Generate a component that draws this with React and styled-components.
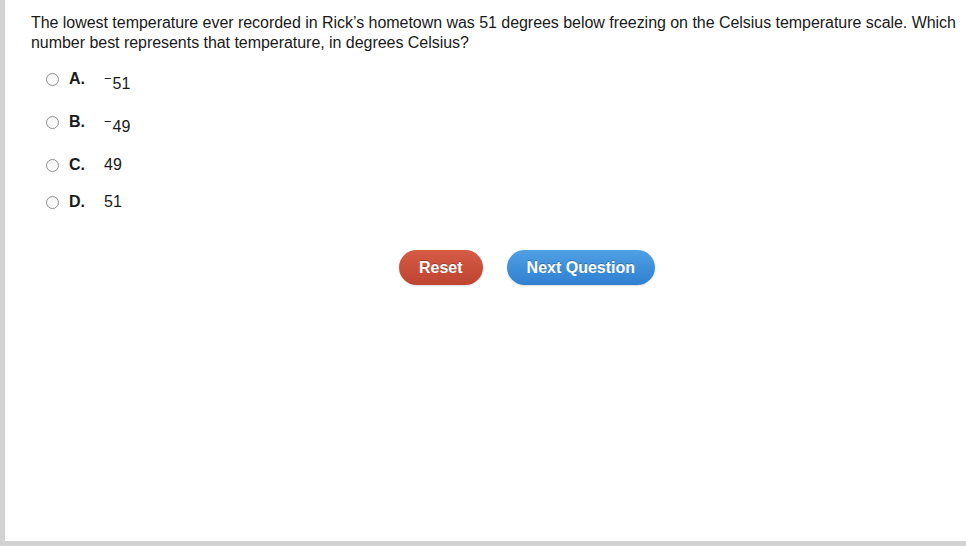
import React from "react";
import styled, { createGlobalStyle } from "styled-components";

const Global = createGlobalStyle`
  html, body { margin: 0; padding: 0; background: #d2d2d2; overflow: hidden; }
  body { font-family: "Liberation Sans", Arial, sans-serif; }
`;

const Frame = styled.div`
  width: 966px;
  height: 546px;
  background: #d2d2d2;
  padding: 0 0 5px 5px;
  box-sizing: border-box;
`;

const Panel = styled.div`
  background: #fff;
  height: 100%;
  padding: 13px 4px 0 26px;
  box-sizing: border-box;
  color: #111;
`;

const Question = styled.p`
  margin: 0;
  font-size: 16px;
  line-height: 20px;
  letter-spacing: -0.04px;
  color: #1a1a1a;
`;

const Options = styled.div`
  display: flex;
  flex-direction: column;
  margin: 17px 0 0 15px;
`;

const Row = styled.label`
  display: flex;
  align-items: flex-start;
  height: ${(p) => (p.$tall ? "43px" : "37px")};
  font-size: 16px;
  line-height: 18px;
`;

const Radio = styled.span`
  width: 11px;
  height: 11px;
  margin-top: 3px;
  border-radius: 50%;
  border: 1px solid #8f8f8f;
  background: linear-gradient(#f4f4f4, #fff);
  flex: none;
`;

const Letter = styled.span`
  font-weight: bold;
  width: 35px;
  margin-left: 10px;
  color: #1a1a1a;
`;

const Value = styled.span`
  color: #1a1a1a;
  margin-top: ${(p) => (p.$tall ? "5px" : "0")};
`;

const Neg = styled.span`
  font-size: 13px;
  position: relative;
  top: -6px;
  margin-right: 1px;
`;

const Buttons = styled.div`
  display: flex;
  gap: 24px;
  margin: 20px 0 0 368px;
`;

const Button = styled.button`
  height: 35px;
  padding: 0 20px;
  border: none;
  border-radius: 18px;
  font-family: "Liberation Sans", Arial, sans-serif;
  font-weight: bold;
  font-size: 16px;
  color: #fff;
  text-shadow: 0 -1px 0 rgba(0, 0, 0, 0.25);
  background: ${(p) =>
    p.$variant === "reset"
      ? "linear-gradient(#d55b45, #bd4431)"
      : "linear-gradient(#4fa0e4, #2f80d0)"};
  box-shadow: 0 1px 2px rgba(0, 0, 0, 0.15);
`;

const options = [
  { letter: "A.", value: "51", neg: true },
  { letter: "B.", value: "49", neg: true },
  { letter: "C.", value: "49" },
  { letter: "D.", value: "51" },
];

export default function App() {
  return (
    <>
      <Global />
      <Frame>
        <Panel>
          <Question>
            The lowest temperature ever recorded in Rick’s hometown was 51 degrees below freezing on the Celsius
            temperature scale. Which number best represents that temperature, in degrees Celsius?
          </Question>
          <Options>
            {options.map((o) => (
              <Row key={o.letter} $tall={o.neg}>
                <Radio />
                <Letter>{o.letter}</Letter>
                <Value $tall={o.neg}>
                  {o.neg && <Neg>−</Neg>}
                  {o.value}
                </Value>
              </Row>
            ))}
          </Options>
          <Buttons>
            <Button $variant="reset">Reset</Button>
            <Button $variant="next">Next Question</Button>
          </Buttons>
        </Panel>
      </Frame>
    </>
  );
}
